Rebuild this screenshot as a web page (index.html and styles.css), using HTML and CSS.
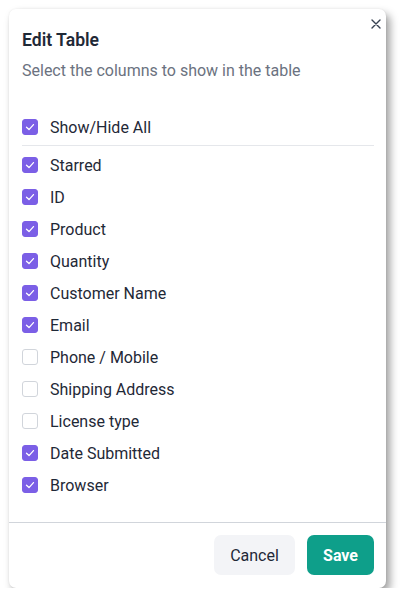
FILE: index.html
```html
<!DOCTYPE html>
<html>
<head>
<meta charset="utf-8">
<link rel="stylesheet" href="styles.css">
</head>
<body>
<div class="modal">
  <button class="close" aria-label="Close">
    <svg width="10" height="10" viewBox="0 0 10 10"><path d="M1 1L9 9M9 1L1 9" stroke="#374151" stroke-width="1.4" stroke-linecap="round"/></svg>
  </button>
  <div class="body">
    <h2 class="title">Edit Table</h2>
    <p class="subtitle">Select the columns to show in the table</p>
    <label class="row all"><span class="cb on"></span><span>Show/Hide All</span></label>
    <div class="list">
      <label class="row"><span class="cb on"></span><span>Starred</span></label>
      <label class="row"><span class="cb on"></span><span>ID</span></label>
      <label class="row"><span class="cb on"></span><span>Product</span></label>
      <label class="row"><span class="cb on"></span><span>Quantity</span></label>
      <label class="row"><span class="cb on"></span><span>Customer Name</span></label>
      <label class="row"><span class="cb on"></span><span>Email</span></label>
      <label class="row"><span class="cb"></span><span>Phone / Mobile</span></label>
      <label class="row"><span class="cb"></span><span>Shipping Address</span></label>
      <label class="row"><span class="cb"></span><span>License type</span></label>
      <label class="row"><span class="cb on"></span><span>Date Submitted</span></label>
      <label class="row"><span class="cb on"></span><span>Browser</span></label>
    </div>
  </div>
  <div class="footer">
    <button class="btn cancel">Cancel</button>
    <button class="btn save">Save</button>
  </div>
</div>
</body>
</html>
```
FILE: styles.css
```css
html, body {
  margin: 0;
  padding: 0;
  background: #ffffff;
  font-family: Roboto, "Liberation Sans", sans-serif;
}
.modal {
  position: relative;
  margin: 9px 0 0 9px;
  width: 377px;
  height: 579px;
  box-sizing: border-box;
  background: #fff;
  border-radius: 7px;
  box-shadow: 4px 5px 9px rgba(0,0,0,0.38), 0 0 2px rgba(0,0,0,0.08);
  display: flex;
  flex-direction: column;
}
.close {
  position: absolute;
  top: 8px;
  right: 3px;
  width: 14px;
  height: 14px;
  padding: 0;
  border: 0;
  background: none;
  display: flex;
  align-items: center;
  justify-content: center;
}
.body {
  flex: 1;
  padding: 19px 12px 0 13px;
}
.title {
  margin: 0;
  font-size: 17.6px;
  line-height: 24px;
  font-weight: 600;
  color: #1f2937;
}
.subtitle {
  margin: 8px 0 0;
  font-size: 16px;
  line-height: 22px;
  color: #6b7280;
}
.row {
  display: flex;
  align-items: center;
  gap: 12px;
  height: 32px;
  font-size: 16px;
  color: #1f2937;
}
.all {
  margin-top: 29px;
  padding-bottom: 2px;
  border-bottom: 1px solid #e5e7eb;
}
.list {
  padding-top: 3px;
}
.cb {
  width: 16px;
  height: 16px;
  box-sizing: border-box;
  border-radius: 3px;
  border: 1px solid #d1d5db;
  background: #fff;
  flex: none;
}
.cb.on {
  border-color: #7b5fe6;
  background: #7b5fe6 url("data:image/svg+xml;utf8,<svg xmlns='http://www.w3.org/2000/svg' width='16' height='16' viewBox='0 0 16 16'><path d='M4.5 8.3L7 10.6L11.5 5.6' fill='none' stroke='white' stroke-width='1.3' stroke-linecap='round' stroke-linejoin='round'/></svg>") center/16px 16px no-repeat;
}
.footer {
  border-top: 1px solid #d1d5db;
  padding: 12px 12px 13px;
  display: flex;
  justify-content: flex-end;
  gap: 12px;
}
.btn {
  height: 40px;
  border: 0;
  border-radius: 7px;
  font-family: Roboto, "Liberation Sans", sans-serif;
  font-size: 16px;
}
.cancel {
  width: 81px;
  background: #f3f4f7;
  color: #1f2937;
  font-weight: 400;
}
.save {
  width: 67px;
  background: #0e9f8a;
  color: #fff;
  font-weight: 700;
}
```
